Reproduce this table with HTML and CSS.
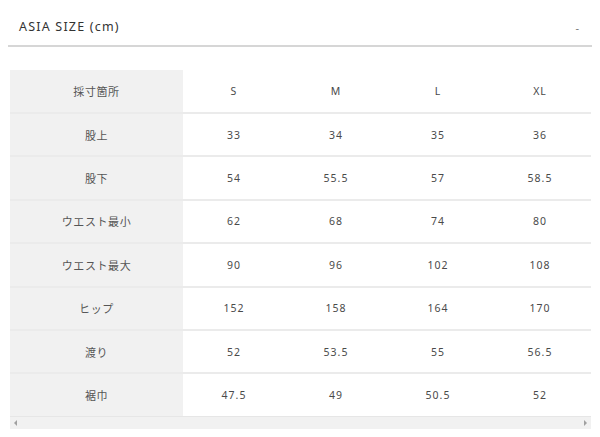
FILE: index.html
```html
<!DOCTYPE html>
<html lang="ja">
<head>
<meta charset="utf-8">
<link rel="stylesheet" href="styles.css">
</head>
<body>
<div class="panel">
  <div class="head">
    <span class="title">ASIA SIZE (cm)</span>
    <span class="toggle">-</span>
  </div>
  <div class="tablewrap">
    <table class="size">
      <tr><th>採寸箇所</th><td>S</td><td>M</td><td>L</td><td>XL</td></tr>
      <tr><th>股上</th><td>33</td><td>34</td><td>35</td><td>36</td></tr>
      <tr><th>股下</th><td>54</td><td>55.5</td><td>57</td><td>58.5</td></tr>
      <tr><th>ウエスト最小</th><td>62</td><td>68</td><td>74</td><td>80</td></tr>
      <tr><th>ウエスト最大</th><td>90</td><td>96</td><td>102</td><td>108</td></tr>
      <tr><th>ヒップ</th><td>152</td><td>158</td><td>164</td><td>170</td></tr>
      <tr><th>渡り</th><td>52</td><td>53.5</td><td>55</td><td>56.5</td></tr>
      <tr><th>裾巾</th><td>47.5</td><td>49</td><td>50.5</td><td>52</td></tr>
    </table>
    <div class="scrollbar">
      <span class="arrow left"></span>
      <span class="arrow right"></span>
    </div>
  </div>
</div>
</body>
</html>
```
FILE: styles.css
```css
html, body {
  margin: 0;
  padding: 0;
  background: #fff;
}
body {
  font-family: "Noto Sans", "Noto Sans CJK JP", sans-serif;
  color: #444;
}
.panel {
  padding: 0 8px;
}
.head {
  height: 45px;
  display: flex;
  align-items: center;
  justify-content: space-between;
  padding: 0 13px 0 11px;
  border-bottom: 2px solid #d6d6d6;
  box-sizing: content-box;
}
.title {
  font-size: 12.5px;
  letter-spacing: 1.2px;
  color: #333;
  padding-top: 7px;
}
.toggle {
  font-size: 11px;
  color: #777;
  padding-top: 10px;
}
.tablewrap {
  margin: 23px 1px 0 2px;
}
.size {
  width: 581px;
  border-collapse: collapse;
  table-layout: fixed;
}
.size th, .size td {
  height: 41.4px;
  padding: 0;
  text-align: center;
  font-size: 10.5px;
  font-weight: 400;
  letter-spacing: 1px;
  color: #4a4a4a;
  border-top: 2px solid #ebebeb;
}
.size tr:first-child th, .size tr:first-child td {
  border-top: none;
  height: 42px;
}
.size th {
  width: 173px;
  background: #f1f1f1;
  font-family: "Noto Sans CJK JP", sans-serif;
  font-size: 11px;
  letter-spacing: 0.6px;
  color: #555;
}
.size td {
  width: 102px;
}
.scrollbar {
  height: 12px;
  background: #f1f1f1;
  border-top: 1px solid #e6e6e6;
  display: flex;
  justify-content: space-between;
  align-items: center;
  padding: 0 4px;
}
.arrow {
  width: 0;
  height: 0;
  border-top: 3px solid transparent;
  border-bottom: 3px solid transparent;
}
.arrow.left {
  border-right: 3px solid #a0a0a0;
}
.arrow.right {
  border-left: 3px solid #a0a0a0;
}
```
